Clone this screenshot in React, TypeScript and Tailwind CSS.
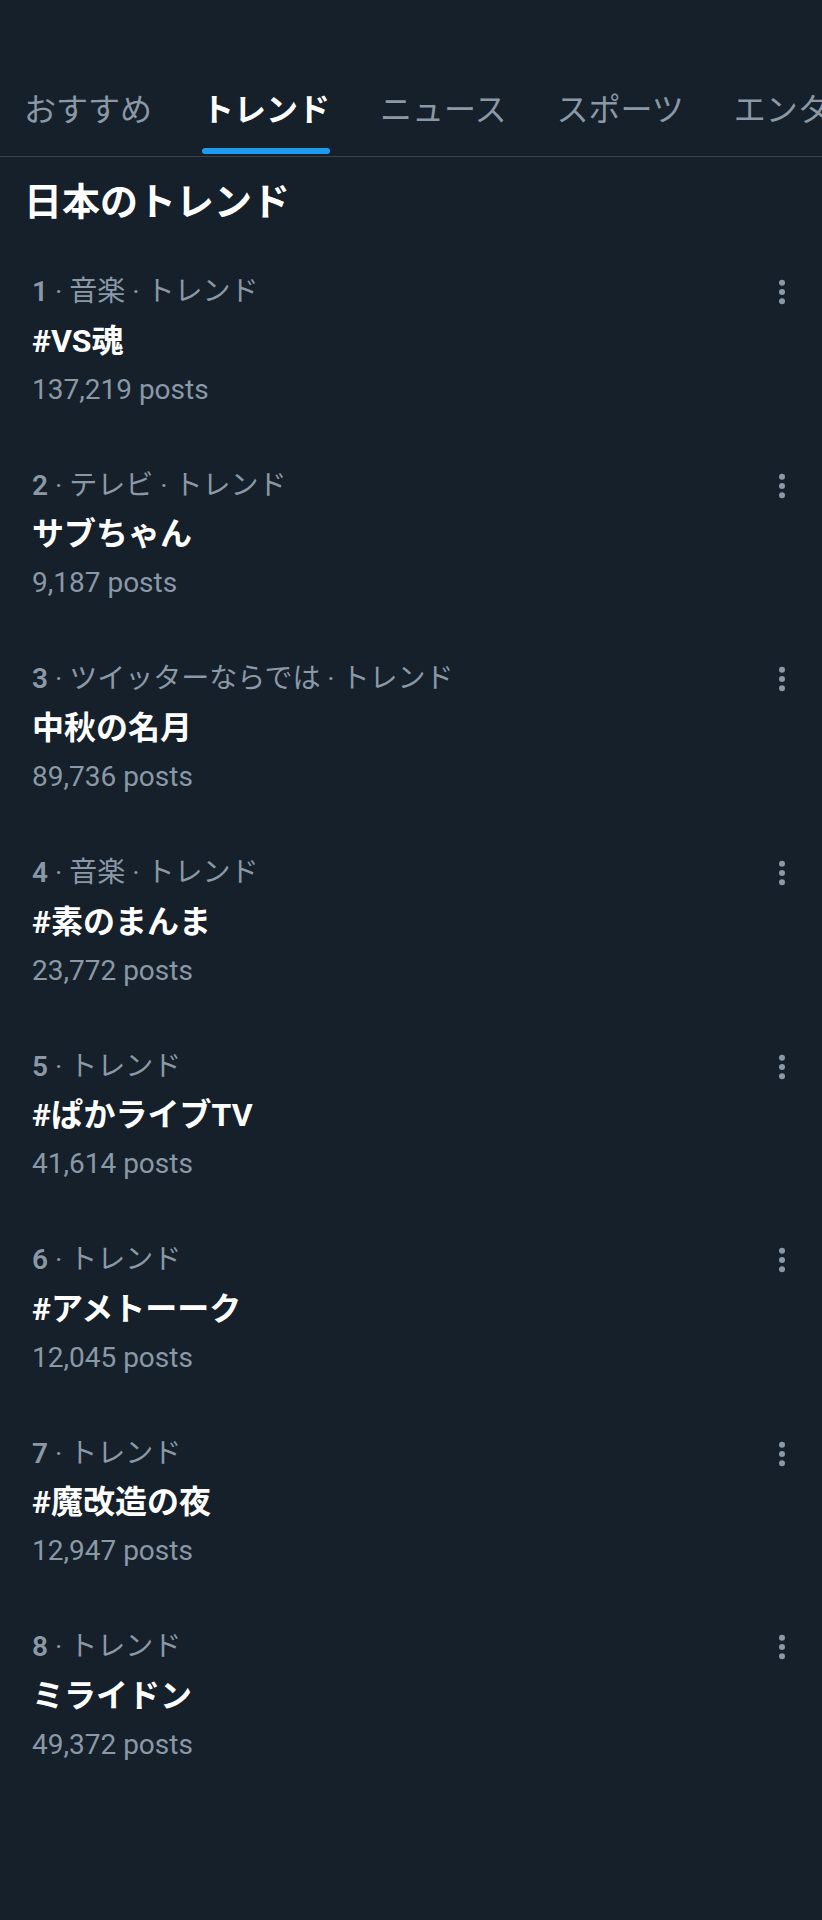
import React from "react";

const tabs = [
  { label: "おすすめ", active: false },
  { label: "トレンド", active: true },
  { label: "ニュース", active: false },
  { label: "スポーツ", active: false },
  { label: "エンターテイメント", active: false },
];

const trends = [
  { rank: 1, cat: "音楽", title: "#VS魂", posts: "137,219" },
  { rank: 2, cat: "テレビ", title: "サブちゃん", posts: "9,187" },
  { rank: 3, cat: "ツイッターならでは", title: "中秋の名月", posts: "89,736" },
  { rank: 4, cat: "音楽", title: "#素のまんま", posts: "23,772" },
  { rank: 5, cat: null, title: "#ぱかライブTV", posts: "41,614" },
  { rank: 6, cat: null, title: "#アメトーーク", posts: "12,045" },
  { rank: 7, cat: null, title: "#魔改造の夜", posts: "12,947" },
  { rank: 8, cat: null, title: "ミライドン", posts: "49,372" },
];

function Dots() {
  return (
    <svg width="12" height="30" viewBox="0 0 12 30" className="block">
      <circle cx="6" cy="5.7" r="3" fill="#8b98a5" />
      <circle cx="6" cy="15" r="3" fill="#8b98a5" />
      <circle cx="6" cy="24.3" r="3" fill="#8b98a5" />
    </svg>
  );
}

export default function App() {
  return (
    <div
      className="w-[822px] min-h-[1920px] bg-[#15202b] overflow-hidden"
      style={{ fontFamily: 'Roboto, "Noto Sans CJK JP", sans-serif' }}
    >
      <div className="h-[157px] pb-[2px] border-b border-[#38444d] flex items-end overflow-hidden">
        <div className="flex gap-[50px] pl-[24px] whitespace-nowrap">
          {tabs.map((t) => (
            <div key={t.label} className="flex flex-col items-stretch">
              <div
                className={
                  t.active
                    ? "text-[32px] leading-[40px] font-bold text-white"
                    : "text-[32px] leading-[40px] font-normal text-[#8b98a5]"
                }
              >
                {t.label}
              </div>
              <div
                className={
                  t.active
                    ? "mt-[18px] h-[6px] rounded-full bg-[#1d9bf0]"
                    : "mt-[18px] h-[6px]"
                }
              />
            </div>
          ))}
        </div>
      </div>

      <h1 className="pl-[24px] mt-[21px] text-[38px] leading-[48px] font-bold text-white">
        日本のトレンド
      </h1>

      <div className="mt-[17px]">
        {trends.map((t) => (
          <div key={t.rank} className="flex pl-[32px] pr-[34px] pt-[31.3px] pb-[28.8px]">
            <div className="flex-1 flex flex-col">
              <div className="text-[28px] leading-[36px] text-[#8b98a5] whitespace-nowrap">
                <span className="font-semibold">{t.rank}</span>
                {" · "}
                {t.cat ? (
                  <>
                    {t.cat}
                    {" · "}
                  </>
                ) : null}
                トレンド
              </div>
              <div className="mt-[10.5px] text-[32px] leading-[40px] font-bold text-white">
                {t.title}
              </div>
              <div className="mt-[11px] text-[28px] leading-[36px] text-[#8b98a5]">
                {t.posts} posts
              </div>
            </div>
            <div className="h-[36px] flex items-center">
              <Dots />
            </div>
          </div>
        ))}
      </div>
    </div>
  );
}
